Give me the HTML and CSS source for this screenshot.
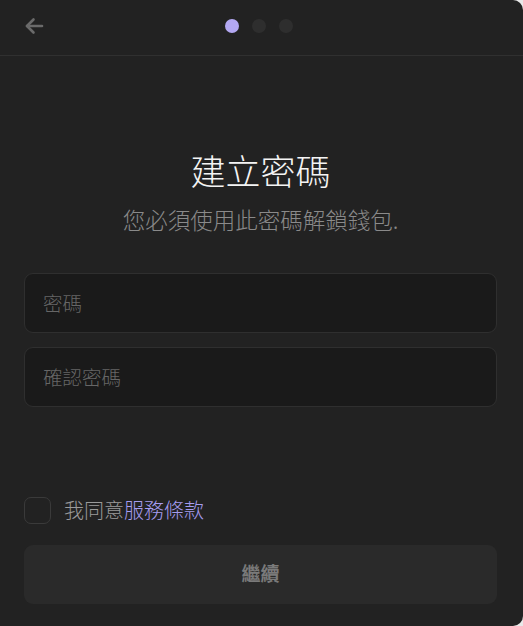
FILE: index.html
```html
<!DOCTYPE html>
<html lang="zh-Hant">
<head>
<meta charset="utf-8">
<link rel="stylesheet" href="styles.css">
</head>
<body>
<div class="app">
  <header class="topbar">
    <button class="back" aria-label="返回">
      <svg width="20" height="18" viewBox="0 0 20 18" fill="none" stroke="#6a6a6a" stroke-width="2.6" stroke-linecap="round" stroke-linejoin="round">
        <path d="M18 9H3"/>
        <path d="M9.5 2.5L3 9l6.5 6.5"/>
      </svg>
    </button>
    <div class="steps">
      <span class="dot active"></span>
      <span class="dot"></span>
      <span class="dot"></span>
    </div>
  </header>
  <main class="content">
    <h1 class="title">建立密碼</h1>
    <p class="subtitle">您必須使用此密碼解鎖錢包.</p>
    <div class="fields">
      <div class="field"><span class="placeholder">密碼</span></div>
      <div class="field"><span class="placeholder">確認密碼</span></div>
    </div>
    <div class="spacer"></div>
    <label class="agree">
      <span class="box"></span>
      <span class="agree-text">我同意<span class="link">服務條款</span></span>
    </label>
    <button class="continue">繼續</button>
  </main>
</div>
</body>
</html>
```

FILE: styles.css
```css
* { box-sizing: border-box; }
html, body { margin: 0; height: 100%; }
body {
  background: #e9e9e9;
  font-family: "Noto Sans CJK TC", "Noto Sans", sans-serif;
}
.app {
  height: 626px;
  width: 523px;
  background: #222222;
  border-radius: 0 10px 10px 0;
  display: flex;
  flex-direction: column;
}
.topbar {
  height: 56px;
  border-bottom: 1px solid #303030;
  display: flex;
  align-items: center;
  position: relative;
  padding: 0 0 0 24px;
}
.back {
  background: none;
  border: 0;
  padding: 0;
  width: 20px;
  height: 18px;
  display: flex;
  margin-top: -4px;
}
.steps {
  position: absolute;
  left: 225px;
  top: 19px;
  display: flex;
  gap: 13px;
}
.dot {
  width: 14px;
  height: 14px;
  border-radius: 50%;
  background: #2e2e2e;
}
.dot.active { background: #b3a8f2; }
.content {
  flex: 1;
  display: flex;
  flex-direction: column;
  padding: 0 26px 22px 24px;
}
.title {
  margin: 92px 0 0;
  text-align: center;
  font-size: 35px;
  font-weight: 300;
  line-height: 44px;
  color: #f4f4f4;
}
.subtitle {
  margin: 12px 0 0;
  text-align: center;
  font-size: 22.5px;
  font-weight: 300;
  line-height: 30px;
  color: #8a8a8a;
}
.fields {
  margin-top: 39px;
  display: flex;
  flex-direction: column;
  gap: 14px;
}
.field {
  height: 60px;
  border-radius: 9px;
  background: #1a1a1a;
  border: 1px solid #2f2f2f;
  display: flex;
  align-items: center;
  padding: 0 18px 2px;
}
.placeholder {
  font-size: 19.5px;
  font-weight: 300;
  color: #666666;
}
.spacer { flex: 1; }
.agree {
  display: flex;
  align-items: center;
  gap: 13px;
}
.box {
  width: 27px;
  height: 27px;
  border: 1.5px solid #3a3a3a;
  border-radius: 7px;
}
.agree-text {
  font-size: 20px;
  font-weight: 300;
  color: #9a9a9a;
  margin-top: -3px;
}
.link { color: #a69cf0; }
.continue {
  margin-top: 21px;
  height: 59px;
  border: 0;
  border-radius: 9px;
  background: #2a2a2a;
  color: #7a7a7a;
  font-family: inherit;
  font-size: 19px;
  font-weight: 700;
  padding: 0 0 5px;
}
```
